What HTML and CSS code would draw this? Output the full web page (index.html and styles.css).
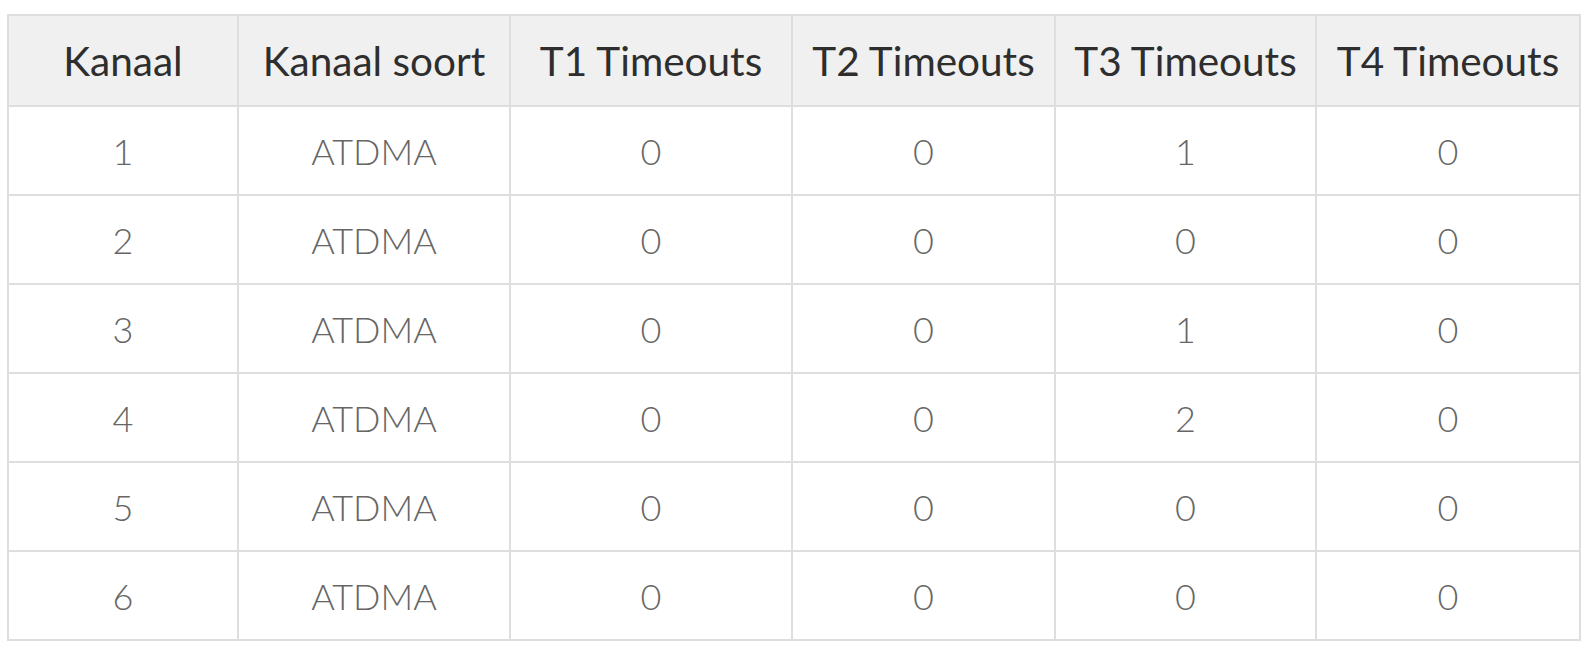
FILE: index.html
```html
<!DOCTYPE html>
<html lang="nl">
<head>
<meta charset="utf-8">
<title>Kanalen</title>
<link rel="stylesheet" href="styles.css">
</head>
<body>
<div class="wrap">
<table class="grid">
<thead>
<tr>
<th class="c1">Kanaal</th>
<th class="c2">Kanaal soort</th>
<th class="c3">T1 Timeouts</th>
<th class="c4">T2 Timeouts</th>
<th class="c5">T3 Timeouts</th>
<th class="c6">T4 Timeouts</th>
</tr>
</thead>
<tbody>
<tr><td>1</td><td>ATDMA</td><td>0</td><td>0</td><td>1</td><td>0</td></tr>
<tr><td>2</td><td>ATDMA</td><td>0</td><td>0</td><td>0</td><td>0</td></tr>
<tr><td>3</td><td>ATDMA</td><td>0</td><td>0</td><td>1</td><td>0</td></tr>
<tr><td>4</td><td>ATDMA</td><td>0</td><td>0</td><td>2</td><td>0</td></tr>
<tr><td>5</td><td>ATDMA</td><td>0</td><td>0</td><td>0</td><td>0</td></tr>
<tr><td>6</td><td>ATDMA</td><td>0</td><td>0</td><td>0</td><td>0</td></tr>
</tbody>
</table>
</div>
</body>
</html>
```
FILE: styles.css
```css
html, body {
  margin: 0;
  padding: 0;
  background: #ffffff;
}
.wrap {
  padding: 14px 0 0 7px;
}
.grid {
  border-collapse: separate;
  border-spacing: 0;
  table-layout: fixed;
  width: 1574px;
  border-top: 2px solid #dedede;
  border-left: 2px solid #dedede;
  font-family: Lato, "Open Sans", sans-serif;
}
.grid th,
.grid td {
  box-sizing: border-box;
  padding: 0;
  text-align: center;
  vertical-align: middle;
  border-right: 2px solid #dedede;
  border-bottom: 2px solid #dedede;
  white-space: nowrap;
}
.grid th {
  height: 91px;
  background: #f0f0f0;
  color: #2e2e2e;
  font-size: 40.5px;
  font-weight: 400;
}
.grid td {
  height: 89px;
  color: #666666;
  font-size: 36px;
  font-weight: 300;
}
.c1 { width: 230px; }
.c2 { width: 272px; }
.c3 { width: 282px; }
.c4 { width: 263px; }
.c5 { width: 261px; }
.c6 { width: 264px; }
```
